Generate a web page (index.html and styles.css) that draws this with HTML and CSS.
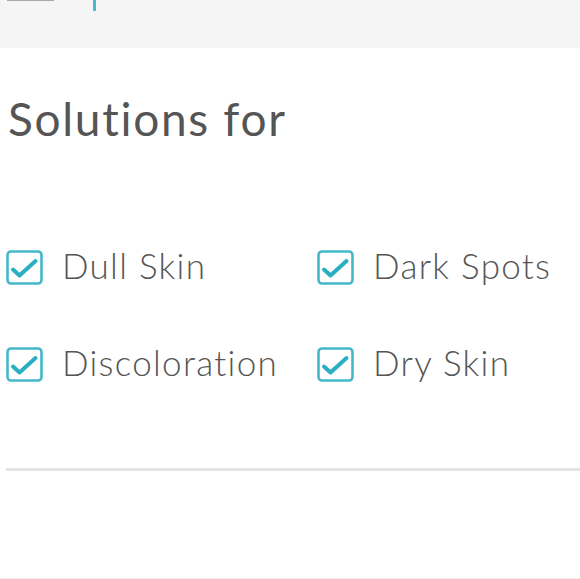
FILE: index.html
```html
<!DOCTYPE html>
<html>
<head>
<meta charset="utf-8">
<link rel="stylesheet" href="styles.css">
</head>
<body>
<header class="topbar">
  <span class="tab-line"></span>
  <span class="tab-mark"></span>
</header>
<main class="content">
  <h1 class="title">Solutions for</h1>
  <ul class="options">
    <li class="option"><svg class="check" viewBox="0 0 37 35" width="37" height="35"><rect x="1.5" y="1.5" width="34" height="32" rx="3.5"/><path d="M7 19.5 L13.5 25.5 L29.5 11"/></svg><span class="label">Dull Skin</span></li>
    <li class="option"><svg class="check" viewBox="0 0 37 35" width="37" height="35"><rect x="1.5" y="1.5" width="34" height="32" rx="3.5"/><path d="M7 19.5 L13.5 25.5 L29.5 11"/></svg><span class="label">Dark Spots</span></li>
    <li class="option"><svg class="check" viewBox="0 0 37 35" width="37" height="35"><rect x="1.5" y="1.5" width="34" height="32" rx="3.5"/><path d="M7 19.5 L13.5 25.5 L29.5 11"/></svg><span class="label">Discoloration</span></li>
    <li class="option"><svg class="check" viewBox="0 0 37 35" width="37" height="35"><rect x="1.5" y="1.5" width="34" height="32" rx="3.5"/><path d="M7 19.5 L13.5 25.5 L29.5 11"/></svg><span class="label">Dry Skin</span></li>
  </ul>
  <hr class="divider">
</main>
<div class="bottom-line"></div>
</body>
</html>
```

FILE: styles.css
```css
html, body {
  margin: 0;
  padding: 0;
  background: #ffffff;
  font-family: "Lato", "Open Sans", sans-serif;
  color: #555555;
}
body {
  height: 579px;
  display: flex;
  flex-direction: column;
  overflow: hidden;
}
.topbar {
  height: 48px;
  background: #f5f5f5;
  display: flex;
  align-items: flex-start;
  flex-shrink: 0;
}
.tab-line {
  margin-left: 7px;
  width: 47px;
  height: 1px;
  background: #a9a9a9;
}
.tab-mark {
  margin-left: 39px;
  width: 3px;
  height: 11px;
  background: #4cb9cc;
}
.content {
  flex: 1;
  display: flex;
  flex-direction: column;
}
.title {
  margin: 47px 0 0 8px;
  font-size: 46px;
  font-weight: 400;
  line-height: 48px;
  color: #555555;
  letter-spacing: 1.7px;
}
.options {
  list-style: none;
  margin: 107px 0 0 6px;
  padding: 0;
  display: grid;
  grid-template-columns: 311px 1fr;
  row-gap: 62px;
}
.option {
  display: flex;
  align-items: center;
  gap: 19px;
  height: 35px;
  font-size: 35px;
  font-weight: 300;
  color: #555555;
  letter-spacing: 1.3px;
}
.label {
  line-height: 35px;
  padding-bottom: 5px;
}
.check {
  flex-shrink: 0;
}
.check rect {
  fill: #ffffff;
  stroke: #44b8ca;
  stroke-width: 2.6;
}
.check path {
  fill: none;
  stroke: #2aaec2;
  stroke-width: 4;
  stroke-linecap: round;
  stroke-linejoin: round;
}
.divider {
  margin: 86px 0 0 6px;
  border: 0;
  height: 3px;
  background: #e4e4e4;
}
.bottom-line {
  height: 1px;
  background: #ececec;
  flex-shrink: 0;
}
```
